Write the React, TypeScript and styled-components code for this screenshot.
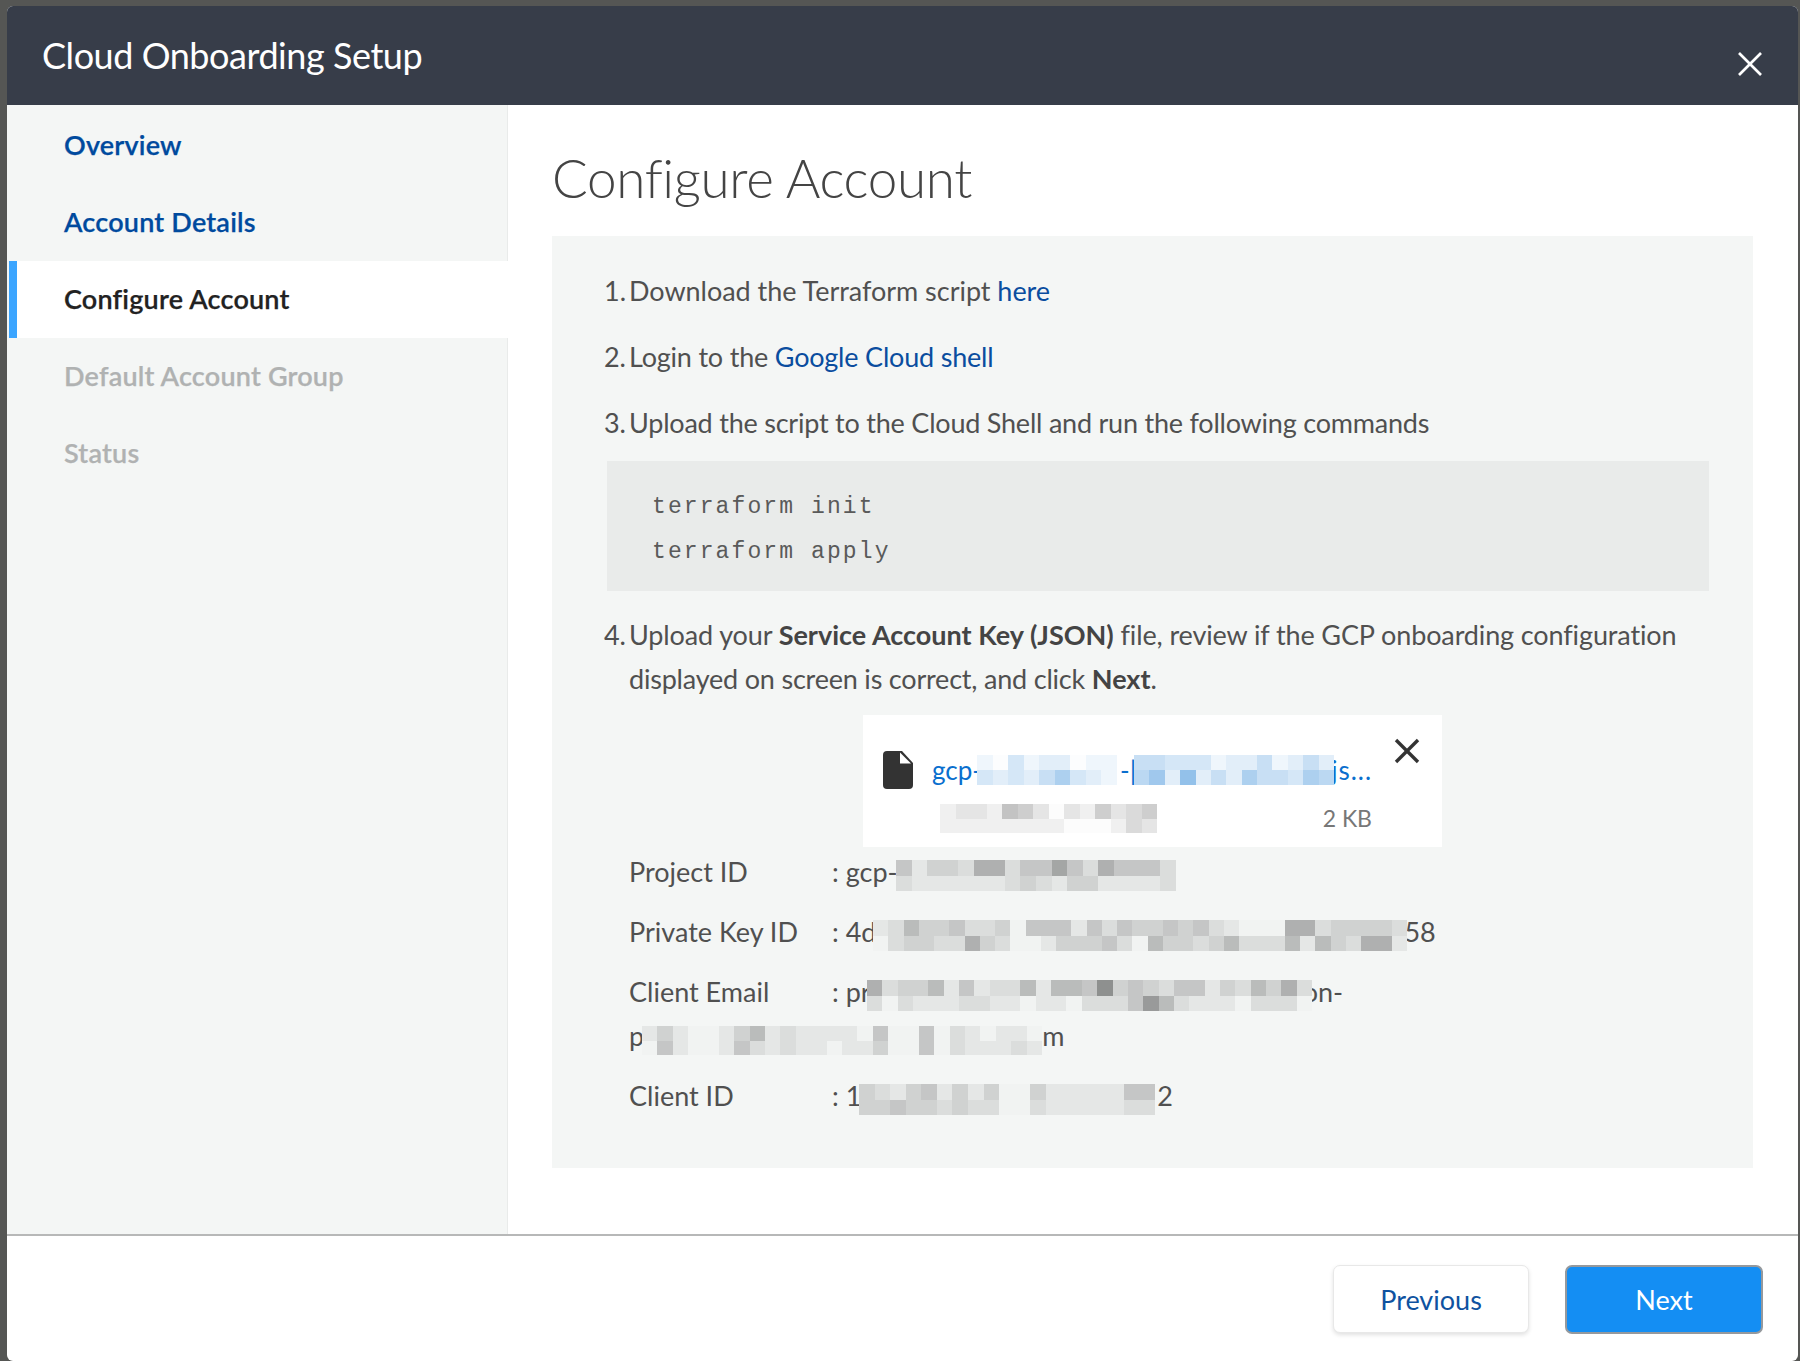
import * as React from 'react';
import styled, { createGlobalStyle } from 'styled-components';

const GlobalStyle = createGlobalStyle`
  html, body {
    margin: 0;
    height: 1361px;
    overflow: hidden;
    background: #555654;
  }
  * {
    box-sizing: border-box;
  }
`;

const Modal = styled.div`
  display: flex;
  flex-direction: column;
  width: 1791px;
  height: 1355px;
  margin: 6px 0 0 7px;
  overflow: hidden;
  background: #fff;
  border-radius: 6px;
  font-family: Lato, 'Open Sans', sans-serif;
`;

const Header = styled.header`
  flex: 0 0 99px;
  display: flex;
  justify-content: space-between;
  padding: 0 35px 0 35px;
  background: #373d49;
  color: #fff;
`;

const HeaderTitle = styled.h2`
  margin: 0;
  font-size: 36px;
  font-weight: 400;
  letter-spacing: -0.45px;
  line-height: 98px;
`;

const HeaderClose = styled.svg`
  width: 26px;
  height: 26px;
  margin-top: 45px;
  stroke: #fff;
  stroke-width: 2.6;
`;

const Body = styled.div`
  flex: 1;
  display: flex;
  min-height: 0;
`;

const Sidebar = styled.nav`
  flex: 0 0 501px;
  padding-top: 2px;
  background: #f4f6f5;
  border-right: 1px solid #e9ebea;
`;

const NavItem = styled.div<{ $state: 'done' | 'active' | 'todo' }>`
  height: 77px;
  padding-left: ${({ $state }) => ($state === 'active' ? '47px' : '57px')};
  margin-left: ${({ $state }) => ($state === 'active' ? '2px' : '0')};
  margin-right: ${({ $state }) => ($state === 'active' ? '-1px' : '0')};
  border-left: ${({ $state }) => ($state === 'active' ? '8px solid #3ba5ff' : 'none')};
  background: ${({ $state }) => ($state === 'active' ? '#fff' : 'transparent')};
  color: ${({ $state }) => ($state === 'done' ? '#004a9e' : $state === 'active' ? '#222' : '#b0b2b2')};
  font-size: 27px;
  font-weight: 600;
  letter-spacing: 0.2px;
  line-height: 75px;
  -webkit-text-stroke: 0.25px currentColor;
`;

const Main = styled.main`
  flex: 1;
  padding: 41px 45px 0 44px;
`;

const PageTitle = styled.h1`
  margin: 0 0 26px;
  color: #444;
  font-size: 53px;
  font-weight: 300;
  letter-spacing: -0.35px;
  line-height: 64px;
`;

const Panel = styled.section`
  height: 932px;
  padding: 33px 0 0 52px;
  background: #f4f6f5;
  color: #505050;
  font-size: 27px;
  line-height: 44px;
`;

const Step = styled.div<{ $spacing: number }>`
  display: flex;
  margin-bottom: 22px;
  padding-right: 30px;
  letter-spacing: ${({ $spacing }) => $spacing}px;
`;

const StepNumber = styled.span`
  flex: 0 0 25px;
`;

const Tracked = styled.span<{ $spacing: number }>`
  letter-spacing: ${({ $spacing }) => $spacing}px;
`;

const Link = styled.a`
  color: #0a4d9f;
`;

const Strong = styled.b`
  color: #444;
  font-weight: 700;
  letter-spacing: 0;
`;

const CodeBlock = styled.pre`
  width: 1102px;
  height: 130px;
  margin: -6px 0 22px 3px;
  padding: 24px 0 0 45px;
  background: #e9ebea;
  color: #5a5a5a;
  font-family: 'Liberation Mono', monospace;
  font-size: 23px;
  letter-spacing: 2.1px;
  line-height: 45px;
`;

const FileCard = styled.div`
  position: relative;
  width: 579px;
  height: 132px;
  margin: -8px 0 3px 259px;
  padding: 36px 0 0 20px;
  background: #fff;
`;

const FileRow = styled.div`
  display: flex;
  align-items: center;
  height: 38px;
  color: #0a6fce;
  font-size: 26px;
  white-space: nowrap;
`;

const FileIcon = styled.svg`
  width: 30px;
  height: 38px;
  margin-right: 19px;
  fill: #333;
`;

const FileMeta = styled.div`
  display: flex;
  align-items: center;
  justify-content: space-between;
  width: 432px;
  height: 30px;
  margin: 14px 0 0 57px;
  color: #777;
  font-size: 23px;
`;

const FileClose = styled.svg`
  position: absolute;
  top: 23px;
  right: 22px;
  width: 26px;
  height: 26px;
  stroke: #333;
  stroke-width: 3.4;
`;

const KeyRow = styled.div`
  margin-bottom: 16px;
  padding-left: 25px;
  white-space: nowrap;
`;

const KeyLabel = styled.span`
  display: inline-block;
  width: 203px;
`;

const MosaicSvg = styled.svg<{ $overlap: number; $after: number; $bg: string }>`
  position: relative;
  display: inline-block;
  vertical-align: -9px;
  margin-left: ${({ $overlap }) => -$overlap}px;
  margin-right: ${({ $after }) => $after}px;
  background: ${({ $bg }) => $bg};
  shape-rendering: crispEdges;
`;

const Footer = styled.footer`
  flex: 0 0 127px;
  display: flex;
  justify-content: flex-end;
  gap: 36px;
  padding: 29px 35px 0 0;
  border-top: 2px solid #b7b8b8;
`;

const Button = styled.button<{ $primary?: boolean }>`
  width: ${({ $primary }) => ($primary ? '198px' : '196px')};
  height: ${({ $primary }) => ($primary ? '69px' : '68px')};
  border: ${({ $primary }) => ($primary ? '2px solid #95999d' : '1px solid #e8e8e8')};
  border-radius: 7px;
  background: ${({ $primary }) => ($primary ? '#148ef3' : '#fff')};
  box-shadow: ${({ $primary }) => ($primary ? 'none' : '0 2px 4px rgba(0, 0, 0, 0.12)')};
  color: ${({ $primary }) => ($primary ? '#fff' : '#0f52a0')};
  font-family: Lato, sans-serif;
  font-size: 27px;
`;

// pixelated bits of the screenshot: each digit is how strong a cell is
const Mosaic = ({ top, bottom, rgb = '0,0,0', unit = 0.045, cell = 15.35, height = 31, overlap = 0, after = 0, bg = '#f4f6f5' }: {
  top: string;
  bottom: string;
  rgb?: string;
  unit?: number;
  cell?: number;
  height?: number;
  overlap?: number;
  after?: number;
  bg?: string;
}) => {
  const cols = top.length;
  const width = Math.round(cols * cell);
  return (
    <MosaicSvg $overlap={overlap} $after={after} $bg={bg} width={width} height={height} viewBox={`0 0 ${cols} 2`} preserveAspectRatio="none">
      {[top, bottom].map((row, y) =>
        row.split('').map((digit, x) => (
          <rect key={`${x}-${y}`} x={x} y={y} width={1} height={1} fill={`rgba(${rgb},${Number(digit) * unit + 0.012})`} />
        ))
      )}
    </MosaicSvg>
  );
};

const Cross = () => (
  <>
    <line x1="2" y1="2" x2="24" y2="24" />
    <line x1="24" y1="2" x2="2" y2="24" />
  </>
);

const App = () => (
  <>
    <GlobalStyle />
    <Modal>
      <Header>
        <HeaderTitle>Cloud Onboarding Setup</HeaderTitle>
        <HeaderClose viewBox="0 0 26 26"><Cross /></HeaderClose>
      </Header>
      <Body>
        <Sidebar>
          <NavItem $state="done">Overview</NavItem>
          <NavItem $state="done">Account Details</NavItem>
          <NavItem $state="active">Configure Account</NavItem>
          <NavItem $state="todo">Default Account Group</NavItem>
          <NavItem $state="todo">Status</NavItem>
        </Sidebar>
        <Main>
          <PageTitle>Configure Account</PageTitle>
          <Panel>
            <Step $spacing={-0.03}>
              <StepNumber>1.</StepNumber>
              <span>Download the Terraform script <Link>here</Link></span>
            </Step>
            <Step $spacing={-0.2}>
              <StepNumber>2.</StepNumber>
              <span>Login to the <Link>Google Cloud shell</Link></span>
            </Step>
            <Step $spacing={-0.22}>
              <StepNumber>3.</StepNumber>
              <span>Upload the script to the Cloud Shell and run the following commands</span>
            </Step>
            <CodeBlock>{'terraform init\nterraform apply'}</CodeBlock>
            <Step $spacing={-0.12}>
              <StepNumber>4.</StepNumber>
              <span>
                Upload your <Strong>Service Account Key (JSON)</Strong> file, review if the GCP onboarding configuration{' '}
                <Tracked $spacing={-0.2}>
                  displayed on screen is correct, and click <Strong>Next</Strong>.
                </Tracked>
              </span>
            </Step>
            <FileCard>
              <FileRow>
                <FileIcon viewBox="0 0 30 38">
                  <path d="M4 0h15l11 12v22a4 4 0 0 1-4 4H4a4 4 0 0 1-4-4V4a4 4 0 0 1 4-4z" />
                  <path d="M17 1.5v11h11z" fill="#fff" />
                </FileIcon>
                gcp-
                <Mosaic top="103122011" bottom="323246321" rgb="20,120,210" unit={0.056} cell={15.5} height={30} overlap={5} after={3} bg="#fff" />
                <span>-|</span>
                <Mosaic top="4433312241242" bottom="5728242644365" rgb="20,120,210" unit={0.056} height={30} overlap={2} after={-3} bg="#fff" />
                <Tracked $spacing={1}>js...</Tracked>
              </FileRow>
              <FileMeta>
                <Mosaic top="12215420214234" bottom="11111111000132" cell={15.5} height={29} bg="#fff" />
                2 KB
              </FileMeta>
              <FileClose viewBox="0 0 26 26"><Cross /></FileClose>
            </FileCard>
            <KeyRow>
              <KeyLabel>Project ID</KeyLabel>
              : gcp-
              <Mosaic top="413326624474264442" bottom="211111123213311112" cell={15.55} overlap={2} />
            </KeyRow>
            <KeyRow>
              <KeyLabel>Private Key ID</KeyLabel>
              : 4d
              <Mosaic
                top="12533422304441424334342100066233332"
                bottom="02332263200133342053323522251532661"
                cell={15.27}
                overlap={3}
                after={-3}
              />
              58
            </KeyRow>
            <KeyRow>
              <KeyLabel>Client Email</KeyLabel>
              : pr
              <Mosaic top="62335141225155493432441325362" bottom="20211122110110222485211102220" overlap={4} after={-9} />
              on-
              <br />
              p
              <Mosaic top="13100135121111040040210110" bottom="04100142121101130040211121" cell={15.4} height={29} overlap={2} />
              m
            </KeyRow>
            <KeyRow>
              <KeyLabel>Client ID</KeyLabel>
              : 1
              <Mosaic top="3213413130031111144" bottom="3343323220021111122" cell={15.6} overlap={2} after={2} />
              2
            </KeyRow>
          </Panel>
        </Main>
      </Body>
      <Footer>
        <Button>Previous</Button>
        <Button $primary>Next</Button>
      </Footer>
    </Modal>
  </>
);

export default App;
